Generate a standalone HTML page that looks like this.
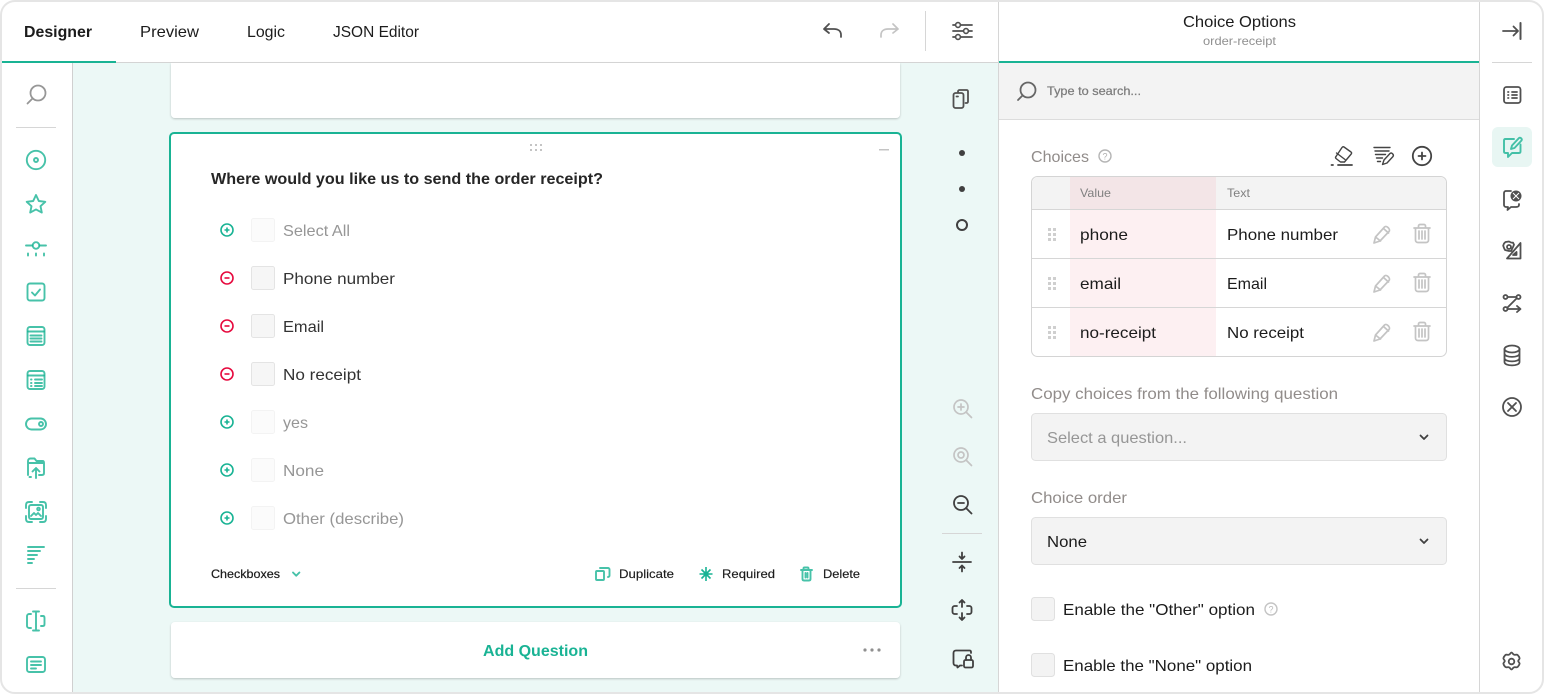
<!DOCTYPE html>
<html lang="en"><head><meta charset="utf-8"><title>Survey Creator</title>
<style>
html,body{margin:0;padding:0;background:#fff;width:1544px;height:694px;overflow:hidden}
svg{display:block;font-family:"Liberation Sans",Arial,sans-serif}
text{fill:#1c1c1c;font-size:16px}
.b{font-weight:bold}
.s{font-size:12px}
.g{fill:#969696}
.l{fill:#918c8a}
.t{fill:none;stroke:#19b394;stroke-width:1.9;stroke-linecap:round;stroke-linejoin:round;opacity:.8}
.k{fill:none;stroke:#505050;stroke-width:1.8;stroke-linecap:round;stroke-linejoin:round}
.lt{fill:none;stroke:#c4c4c4;stroke-width:1.7;stroke-linecap:round;stroke-linejoin:round}
</style></head><body>
<svg xmlns="http://www.w3.org/2000/svg" width="1544" height="694" viewBox="0 0 1544 694">
<defs><filter id="sh" x="-2%" y="-20%" width="104%" height="140%"><feDropShadow dx="0" dy="1" stdDeviation="1" flood-color="#000" flood-opacity=".22"/></filter>
<clipPath id="fr"><rect x="1" y="1" width="1542" height="692" rx="14"/></clipPath></defs>
<g clip-path="url(#fr)">
<rect width="1544" height="694" fill="#fff"/>
<!-- canvas -->
<rect x="73" y="63" width="925" height="631" fill="#ecf8f6"/>
<rect x="72" y="63" width="1" height="631" fill="#d0d0d0"/>
<!-- top card -->
<g filter="url(#sh)"><path d="M171 63h729v51a4 4 0 0 1-4 4H175a4 4 0 0 1-4-4z" fill="#fff"/></g>
<rect x="998" y="0" width="1" height="694" fill="#d6d6d6"/>
<rect x="1479" y="0" width="1" height="694" fill="#d6d6d6"/>
<rect x="0" y="62" width="998" height="1" fill="#d4d4d4"/>
<rect x="0" y="61" width="116" height="2" fill="#19b394"/>
<rect x="999" y="61" width="480" height="2" fill="#19b394"/>
<!-- tabs -->
<text x="24" y="37" class="b" textLength="68" lengthAdjust="spacingAndGlyphs">Designer</text>
<text x="140" y="37" textLength="59" lengthAdjust="spacingAndGlyphs">Preview</text>
<text x="247" y="37" textLength="38" lengthAdjust="spacingAndGlyphs">Logic</text>
<text x="333" y="37" textLength="86" lengthAdjust="spacingAndGlyphs">JSON Editor</text>
<!-- undo redo settings -->
<path class="k" d="M824 29l5-5M824 29l5 4M824 29h10c4 0 7 2 7 6v2"/>
<path class="lt" d="M898 29l-5-5M898 29l-5 4M898 29h-10c-4 0-7 2-7 6v2"/>
<rect x="925" y="11" width="1" height="40" fill="#d6d6d6"/>
<path class="k" d="M953 25h19M953 31h19M953 37h19"/>
<circle cx="958" cy="25" r="2.4" fill="#fff" stroke="#505050" stroke-width="1.6"/><circle cx="966" cy="31" r="2.4" fill="#fff" stroke="#505050" stroke-width="1.6"/><circle cx="958" cy="37" r="2.4" fill="#fff" stroke="#505050" stroke-width="1.6"/>
<!-- left sidebar -->
<g class="k" style="stroke:#979797"><circle cx="38" cy="93" r="7.500"/><path d="M32.500 98.500l-5 5"/></g>
<rect x="16" y="127" width="40" height="1" fill="#d6d6d6"/>
<rect x="16" y="588" width="40" height="1" fill="#d6d6d6"/>
<circle class="t" cx="36" cy="160" r="9.200"/><circle class="t" cx="36" cy="160" r="2"/>
<path class="t" d="M36 195l2.800 6 6.500.8-4.800 4.400 1.300 6.400-5.800-3.200-5.800 3.200 1.300-6.400-4.800-4.400 6.500-.8z"/>
<path class="t" d="M26 245.500h6.500M39.500 245.500h6.500"/><circle class="t" cx="36" cy="245.500" r="3.300"/><path class="t" d="M28 253.500v2M36 253.500v2M44 253.500v2"/>
<rect class="t" x="27.500" y="283.500" width="17" height="17" rx="2.500"/><path class="t" d="M32 292.500l3 3 5-6"/>
<rect class="t" x="27.500" y="327" width="17" height="18" rx="2.500"/><path class="t" d="M28 331.500h16M30.500 335.500h11M30.500 338.500h11M30.500 341.500h11"/>
<rect class="t" x="27.500" y="371" width="17" height="18" rx="2.500"/><path class="t" d="M28 375.500h16M31 379.500h.5M35 379.500h7M31 383h.5M35 383h7M31 386h.5M35 386h7"/>
<rect class="t" x="26" y="418.500" width="20" height="11" rx="5.500"/><circle class="t" cx="41" cy="424" r="2"/>
<path class="t" d="M28 475v-14c0-1.500 1-2.500 2.500-2.500h4l2 2.500h6c1 0 1.500.7 1.500 2v10c0 1.300-.7 2-2 2h-3M31 477h-1.500M36 478v-10M32.500 471.500L36 468l3.500 3.500M28 463h16"/>
<path class="t" d="M26 508v-3c0-2 1-3 3-3h3M40 502h3c2 0 3 1 3 3v3M46 516v3c0 2-1 3-3 3h-3M32 522h-3c-2 0-3-1-3-3v-3"/><rect class="t" x="29" y="505" width="14" height="14" rx="2"/><path class="t" d="M31 516l3-3 2 2 2-2 3 3"/><circle class="t" cx="38.500" cy="509" r="1.300"/>
<path class="t" d="M28 547h16M28 551h12M28 555h9M28 559h6M28 563h4"/>
<path class="t" d="M31 614h-2c-1 0-2 1-2 2v10c0 1 1 2 2 2h2M36 612v18M33 611.500h6M33 630.500h6M41 616h2c1 0 1.500.5 1.500 2v6c0 1.500-.5 2-1.500 2h-2"/>
<rect class="t" x="27" y="657" width="18" height="15" rx="2.500"/><path class="t" d="M31 661.500h10M31 665h10M31 668.500h5"/>
<!-- question card -->
<rect x="170" y="133" width="731" height="474" rx="4" fill="#fff" stroke="#19b394" stroke-width="2"/>
<g fill="#c4c4c4"><rect x="530" y="144" width="2" height="2"/><rect x="535" y="144" width="2" height="2"/><rect x="540" y="144" width="2" height="2"/><rect x="530" y="149" width="2" height="2"/><rect x="535" y="149" width="2" height="2"/><rect x="540" y="149" width="2" height="2"/></g>
<rect x="879" y="149" width="10" height="1.500" fill="#c4c4c4"/>
<text x="211" y="184" class="b" style="fill:#262626" textLength="392" lengthAdjust="spacingAndGlyphs">Where would you like us to send the order receipt?</text>
<!-- items -->
<circle cx="227" cy="230" r="6" fill="none" stroke="#19b394" stroke-width="1.600"/><path d="M224.500 230h5M227 227.500v5" stroke="#19b394" stroke-width="1.600"/>
<rect x="251.500" y="218.500" width="23" height="23" rx="2" fill="#fbfbfb" stroke="#f3f3f3"/>
<text x="283" y="236" class="g" textLength="67" lengthAdjust="spacingAndGlyphs">Select All</text>
<circle cx="227" cy="278" r="6" fill="none" stroke="#e60a3e" stroke-width="1.600"/><path d="M224.500 278h5" stroke="#e60a3e" stroke-width="1.600"/>
<rect x="251.500" y="266.500" width="23" height="23" rx="2" fill="#f6f6f6" stroke="#e4e4e4"/>
<text x="283" y="284" style="fill:#333" textLength="112" lengthAdjust="spacingAndGlyphs">Phone number</text>
<circle cx="227" cy="326" r="6" fill="none" stroke="#e60a3e" stroke-width="1.600"/><path d="M224.500 326h5" stroke="#e60a3e" stroke-width="1.600"/>
<rect x="251.500" y="314.500" width="23" height="23" rx="2" fill="#f6f6f6" stroke="#e4e4e4"/>
<text x="283" y="332" style="fill:#333" textLength="41" lengthAdjust="spacingAndGlyphs">Email</text>
<circle cx="227" cy="374" r="6" fill="none" stroke="#e60a3e" stroke-width="1.600"/><path d="M224.500 374h5" stroke="#e60a3e" stroke-width="1.600"/>
<rect x="251.500" y="362.500" width="23" height="23" rx="2" fill="#f6f6f6" stroke="#e4e4e4"/>
<text x="283" y="380" style="fill:#333" textLength="78" lengthAdjust="spacingAndGlyphs">No receipt</text>
<circle cx="227" cy="422" r="6" fill="none" stroke="#19b394" stroke-width="1.600"/><path d="M224.500 422h5M227 419.500v5" stroke="#19b394" stroke-width="1.600"/>
<rect x="251.500" y="410.500" width="23" height="23" rx="2" fill="#fbfbfb" stroke="#f3f3f3"/>
<text x="283" y="428" class="g" textLength="25" lengthAdjust="spacingAndGlyphs">yes</text>
<circle cx="227" cy="470" r="6" fill="none" stroke="#19b394" stroke-width="1.600"/><path d="M224.500 470h5M227 467.500v5" stroke="#19b394" stroke-width="1.600"/>
<rect x="251.500" y="458.500" width="23" height="23" rx="2" fill="#fbfbfb" stroke="#f3f3f3"/>
<text x="283" y="476" class="g" textLength="41" lengthAdjust="spacingAndGlyphs">None</text>
<circle cx="227" cy="518" r="6" fill="none" stroke="#19b394" stroke-width="1.600"/><path d="M224.500 518h5M227 515.500v5" stroke="#19b394" stroke-width="1.600"/>
<rect x="251.500" y="506.500" width="23" height="23" rx="2" fill="#fbfbfb" stroke="#f3f3f3"/>
<text x="283" y="524" class="g" textLength="121" lengthAdjust="spacingAndGlyphs">Other (describe)</text>
<!-- footer -->
<text x="211" y="578" class="s" style="stroke:#161616;stroke-width:.2" textLength="69" lengthAdjust="spacingAndGlyphs">Checkboxes</text>
<path class="t" d="M293 572.500l3.200 3.200 3.200-3.200"/>
<path class="t" d="M597 571h6a1 1 0 0 1 1 1v7a1 1 0 0 1-1 1h-6a1 1 0 0 1-1-1v-7a1 1 0 0 1 1-1zM600 568h8a1.500 1.500 0 0 1 1.500 1.500v6a1.500 1.500 0 0 1-1.500 1.500"/>
<text x="619" y="578" class="s" style="stroke:#161616;stroke-width:.15" textLength="55" lengthAdjust="spacingAndGlyphs">Duplicate</text>
<path d="M706 567v14M699.500 574h13M701.500 569.500l9 9M710.500 569.500l-9 9" stroke="#19b394" stroke-width="1.600" fill="none"/><circle cx="706" cy="574" r="2.500" fill="#19b394"/>
<text x="722" y="578" class="s" style="stroke:#161616;stroke-width:.15" textLength="53" lengthAdjust="spacingAndGlyphs">Required</text>
<path class="t" d="M801 570h11M803.500 570v-1.500c0-.7.500-1 1-1h3c.6 0 1 .3 1 1v1.500M802.500 570v9c0 1 .7 1.500 1.500 1.500h5c.8 0 1.500-.5 1.500-1.500v-9M805.500 573v4.500M807.500 573v4.500"/>
<text x="823" y="578" class="s" style="stroke:#161616;stroke-width:.15" textLength="37" lengthAdjust="spacingAndGlyphs">Delete</text>
<!-- add question -->
<g filter="url(#sh)"><rect x="171" y="622" width="729" height="56" rx="4" fill="#fff"/></g>
<text x="483" y="656" class="b" style="fill:#19b394" textLength="105" lengthAdjust="spacingAndGlyphs">Add Question</text>
<g fill="#909090"><circle cx="865" cy="650" r="1.600"/><circle cx="872" cy="650" r="1.600"/><circle cx="879" cy="650" r="1.600"/></g>
<!-- right tools -->
<rect class="k" x="953.500" y="93" width="10" height="15" rx="2"/><path class="k" d="M956.500 96.500h1.500M958 92.500v-1c0-1 .8-1.500 1.500-1.500h7c1 0 1.500.7 1.500 1.500v10c0 1-.5 1.500-1.500 1.500h-1"/>
<circle cx="962" cy="153" r="3" fill="#404040"/><circle cx="962" cy="189" r="3" fill="#404040"/><circle cx="962" cy="225" r="5" fill="none" stroke="#404040" stroke-width="2"/>
<g class="lt"><circle cx="961" cy="407" r="7"/><path d="M966 412l5.500 5.500M958 407h6M961 404v6"/></g>
<g class="lt"><circle cx="961" cy="455" r="7"/><circle cx="961" cy="455" r="3"/><path d="M966 460l5.500 5.500"/></g>
<g class="k" style="stroke:#404040"><circle cx="961" cy="503" r="7"/><path d="M966 508l5.500 5.500M958 503h6"/></g>
<rect x="942" y="533" width="40" height="1" fill="#d6d6d6"/>
<g class="k" style="stroke:#404040"><path d="M953 562h18M962 552.500v6.500M959.500 556.500l2.500 2.500 2.500-2.500M962 571.500v-6M959.500 568l2.500-2.500 2.500 2.500"/></g>
<g class="k" style="stroke:#404040"><path d="M962 600v7M959.500 602.500l2.500-2.500 2.500 2.500M962 620v-7M959.500 617.500l2.500 2.500 2.500-2.500M957 606h-2.500c-1 0-2 1-2 2v4c0 1 1 2 2 2h2.500M967 606h2.500c1 0 2 1 2 2v4c0 1-1 2-2 2h-2.500"/></g>
<g class="k" style="stroke:#404040"><path d="M971 653v-1c0-1-.5-1.500-1.500-1.500H956c-1.500 0-2.500 1-2.500 2.500v10c0 1.500 1 2.500 2.500 2.500h1l.5 2 2.500-2h2"/><rect x="964" y="660" width="9" height="7.500" rx="1.500"/><path d="M966 660v-2.500c0-3.300 5-3.300 5 0v2.500"/></g>
<!-- panel -->
<rect x="999" y="63" width="480" height="56" fill="#f3f3f3"/><rect x="999" y="119" width="480" height="1" fill="#dcdcdc"/>
<text x="1183" y="27" textLength="113" lengthAdjust="spacingAndGlyphs">Choice Options</text>
<text x="1203" y="45" class="s" style="fill:#909090" textLength="73" lengthAdjust="spacingAndGlyphs">order-receipt</text>
<g class="k" style="stroke:#666"><circle cx="1028" cy="90" r="7.500"/><path d="M1022.500 95.500l-4.500 4.500"/></g>
<text x="1047" y="95" class="s" style="fill:#7c7c7c;stroke:#7c7c7c;stroke-width:.25" textLength="94" lengthAdjust="spacingAndGlyphs">Type to search...</text>
<text x="1031" y="162" class="l" textLength="58" lengthAdjust="spacingAndGlyphs">Choices</text>
<circle cx="1105" cy="156" r="6" fill="none" stroke="#b5b5b5" stroke-width="1.400"/><text x="1102.500" y="159.500" style="font-size:9px;fill:#b0b0b0">?</text>
<g class="k" style="stroke:#444"><path d="M1344 147l7 5c.8.6.8 1.300.2 2l-6.700 8h-4l-4.500-3.500c-.6-.6-.6-1.300 0-2l6-9c.6-.8 1.300-1 2-.5zM1336.500 153l8.500 6.500" style="stroke-width:1.400"/><path d="M1331.500 165h1.500M1338 165h14"/></g>
<g class="k" style="stroke:#444;stroke-width:1.400"><path d="M1374 147.500h16M1375 151h14M1375.500 154.500h10M1376.500 158h6M1377.500 161.500h3"/><path d="M1390 153.500l-6 6.500-1.500 4.500 4.500-1.500 6-6.500c1.300-1.800-1.500-4.500-3-3z" fill="#fff"/></g>
<g class="k" style="stroke:#444"><circle cx="1422" cy="156" r="9.200"/><path d="M1418.500 156h7M1422 152.500v7"/></g>
<!-- table -->
<rect x="1031.500" y="176.500" width="415" height="180" rx="6" fill="#fff" stroke="#d4d4d4"/>
<path d="M1032 209v-26a6 6 0 0 1 6-6h402a6 6 0 0 1 6 6v26z" fill="#f3f3f3"/>
<rect x="1070" y="177" width="146" height="32" fill="#f3e5e7"/>
<rect x="1070" y="210" width="146" height="146" fill="#fdf0f2"/>
<rect x="1032" y="209" width="414" height="1" fill="#d6d6d6"/><rect x="1032" y="258" width="414" height="1" fill="#d6d6d6"/><rect x="1032" y="307" width="414" height="1" fill="#d6d6d6"/>
<text x="1080" y="197" class="s" style="fill:#808080" textLength="31" lengthAdjust="spacingAndGlyphs">Value</text>
<text x="1227" y="197" class="s" style="fill:#808080" textLength="23" lengthAdjust="spacingAndGlyphs">Text</text>
<text x="1080" y="240" textLength="48" lengthAdjust="spacingAndGlyphs">phone</text><text x="1227" y="240" textLength="111" lengthAdjust="spacingAndGlyphs">Phone number</text>
<text x="1080" y="289" textLength="41" lengthAdjust="spacingAndGlyphs">email</text><text x="1227" y="289" textLength="40" lengthAdjust="spacingAndGlyphs">Email</text>
<text x="1080" y="338" textLength="76" lengthAdjust="spacingAndGlyphs">no-receipt</text><text x="1227" y="338" textLength="77" lengthAdjust="spacingAndGlyphs">No receipt</text>
<g fill="#cfcfcf"><rect x="1048" y="228" width="3" height="3"/><rect x="1053" y="228" width="3" height="3"/><rect x="1048" y="233" width="3" height="3"/><rect x="1053" y="233" width="3" height="3"/><rect x="1048" y="238" width="3" height="3"/><rect x="1053" y="238" width="3" height="3"/>
<rect x="1048" y="277" width="3" height="3"/><rect x="1053" y="277" width="3" height="3"/><rect x="1048" y="282" width="3" height="3"/><rect x="1053" y="282" width="3" height="3"/><rect x="1048" y="287" width="3" height="3"/><rect x="1053" y="287" width="3" height="3"/>
<rect x="1048" y="326" width="3" height="3"/><rect x="1053" y="326" width="3" height="3"/><rect x="1048" y="331" width="3" height="3"/><rect x="1053" y="331" width="3" height="3"/><rect x="1048" y="336" width="3" height="3"/><rect x="1053" y="336" width="3" height="3"/></g>
<g class="lt"><path d="M1374 243l1.500-6 9-10c2-2 6.500 2.500 4.500 4.500l-9 9.500zM1375.500 237l5 4M1383.500 228.500l5 4.500"/></g>
<g class="lt"><path d="M1374 292l1.500-6 9-10c2-2 6.500 2.500 4.500 4.500l-9 9.500zM1375.500 286l5 4M1383.500 277.500l5 4.500"/></g>
<g class="lt"><path d="M1374 341l1.500-6 9-10c2-2 6.500 2.500 4.500 4.500l-9 9.500zM1375.500 335l5 4M1383.500 326.500l5 4.500"/></g>
<g class="lt"><path d="M1414 228h16M1418.500 228v-2c0-1 .8-1.500 1.500-1.500h4c.7 0 1.500.5 1.500 1.500v2M1415.500 228v12c0 1.500 1 2.500 2.500 2.500h8c1.500 0 2.500-1 2.500-2.500v-12M1419 231v8M1422 231v8M1425 231v8"/></g>
<g class="lt"><path d="M1414 277h16M1418.500 277v-2c0-1 .8-1.500 1.500-1.500h4c.7 0 1.500.5 1.500 1.500v2M1415.500 277v12c0 1.500 1 2.500 2.500 2.500h8c1.500 0 2.500-1 2.500-2.500v-12M1419 280v8M1422 280v8M1425 280v8"/></g>
<g class="lt"><path d="M1414 326h16M1418.500 326v-2c0-1 .8-1.500 1.500-1.500h4c.7 0 1.500.5 1.500 1.500v2M1415.500 326v12c0 1.500 1 2.500 2.500 2.500h8c1.500 0 2.500-1 2.500-2.500v-12M1419 329v8M1422 329v8M1425 329v8"/></g>
<text x="1031" y="399" class="l" textLength="307" lengthAdjust="spacingAndGlyphs">Copy choices from the following question</text>
<rect x="1031.500" y="413.500" width="415" height="47" rx="4" fill="#f3f3f3" stroke="#e0e0e0"/>
<text x="1047" y="443" class="g" textLength="140" lengthAdjust="spacingAndGlyphs">Select a question...</text>
<path class="k" style="stroke:#404040" d="M1420.500 435.500l3.500 3.500 3.500-3.500"/>
<text x="1031" y="503" class="l" textLength="96" lengthAdjust="spacingAndGlyphs">Choice order</text>
<rect x="1031.500" y="517.500" width="415" height="47" rx="4" fill="#f3f3f3" stroke="#e0e0e0"/>
<text x="1047" y="547" textLength="40" lengthAdjust="spacingAndGlyphs">None</text>
<path class="k" style="stroke:#404040" d="M1420.500 539.500l3.500 3.500 3.500-3.500"/>
<rect x="1031.500" y="597.500" width="23" height="23" rx="3" fill="#f3f3f3" stroke="#e0e0e0"/>
<text x="1063" y="615" textLength="192" lengthAdjust="spacingAndGlyphs">Enable the "Other" option</text>
<circle cx="1271" cy="609" r="6" fill="none" stroke="#c4c4c4" stroke-width="1.400"/><text x="1268.500" y="612.500" style="font-size:9px;fill:#bbb">?</text>
<rect x="1031.500" y="653.500" width="23" height="23" rx="3" fill="#f3f3f3" stroke="#e0e0e0"/>
<text x="1063" y="671" textLength="189" lengthAdjust="spacingAndGlyphs">Enable the "None" option</text>
<!-- right sidebar -->
<g class="k"><path d="M1503 31h15M1513.500 26.500l4.500 4.500-4.500 4.500"/><path d="M1520.500 23v16" style="stroke-width:2"/></g>
<rect x="1492" y="62" width="40" height="1" fill="#d6d6d6"/>
<rect class="k" x="1504" y="87" width="16.500" height="16" rx="2.500"/><path class="k" d="M1508 92h.5M1512 92h5M1508 95h.5M1512 95h5M1508 98h.5M1512 98h5"/>
<rect x="1492" y="127" width="40" height="40" rx="6" fill="#e8f6f3"/>
<path class="t" d="M1514 139h-8.500c-1 0-1.500.5-1.500 1.500v11c0 1 .5 1.500 1.500 1.500h2.500v4l4-4h7c1 0 1.500-.5 1.500-1.500v-7"/><path class="t" d="M1511 149l1-3.500 7-7.500c1.500-1 3.500 1 2.500 2.500l-7 7.500z"/>
<path class="k" d="M1511 191h-5c-1 0-2 .7-2 2v12c0 1.300 1 2 2 2h2l-.5 3 3.500-3h5c1.500 0 3-.7 3-2v-1"/><circle cx="1516" cy="196" r="5.500" fill="#505050"/><path d="M1513 193l6 6M1519 193l-6 6" stroke="#fff" stroke-width="1"/>
<circle class="k" cx="1509" cy="247" r="2"/><path class="k" d="M1509 241.500l2 1 2 .2 1 2-1 2.300-1 2-.7 2-2.300 0-2-.5-2-.5-1-2-.8-2.300.8-2.200 1.500-1.500z" fill="#fff"/><path class="k" d="M1520.500 243v15.500h-13.500zM1516.500 252v3h-3.500z"/>
<circle class="k" cx="1505.500" cy="297" r="2"/><circle class="k" cx="1518.500" cy="297" r="2"/><circle class="k" cx="1505.500" cy="309" r="2"/><path class="k" d="M1508 297h8M1516.500 298.500l-9 9M1508 309h12M1517 306l3.500 3-3.500 3"/>
<ellipse class="k" cx="1512" cy="349" rx="7.500" ry="3.500"/><path class="k" d="M1504.500 349v13c0 4.500 15 4.500 15 0v-13M1504.500 353.500c0 4.500 15 4.500 15 0M1504.500 358c0 4.500 15 4.500 15 0"/>
<circle class="k" cx="1512" cy="407" r="9"/><path class="k" d="M1508 403l8 8M1516 403l-8 8"/>
<path class="k" d="M1511.500 652.500c1 0 1.300 1.800 2.500 2.200 1.200.4 2.800-.5 3.600.3.900.9 1.800 2.200 2 3.300.2 1-1.400 1.700-1.400 2.700s1.600 1.700 1.400 2.700c-.2 1.100-1.100 2.400-2 3.300-.8.800-2.400-.1-3.600.3-1.200.4-1.500 2.200-2.500 2.200s-1.300-1.800-2.500-2.200c-1.200-.4-2.800.5-3.600-.3-.9-.9-1.800-2.200-2-3.300-.2-1 1.400-1.700 1.400-2.700s-1.600-1.700-1.400-2.700c.2-1.100 1.100-2.400 2-3.300.8-.8 2.400.1 3.600-.3 1.200-.4 1.500-2.200 2.500-2.200z"/><circle class="k" cx="1511.500" cy="661.500" r="2.800"/>
</g>
<rect x="1" y="1" width="1542" height="692" rx="14" fill="none" stroke="#e5e5e5" stroke-width="2"/>
</svg>
</body></html>
